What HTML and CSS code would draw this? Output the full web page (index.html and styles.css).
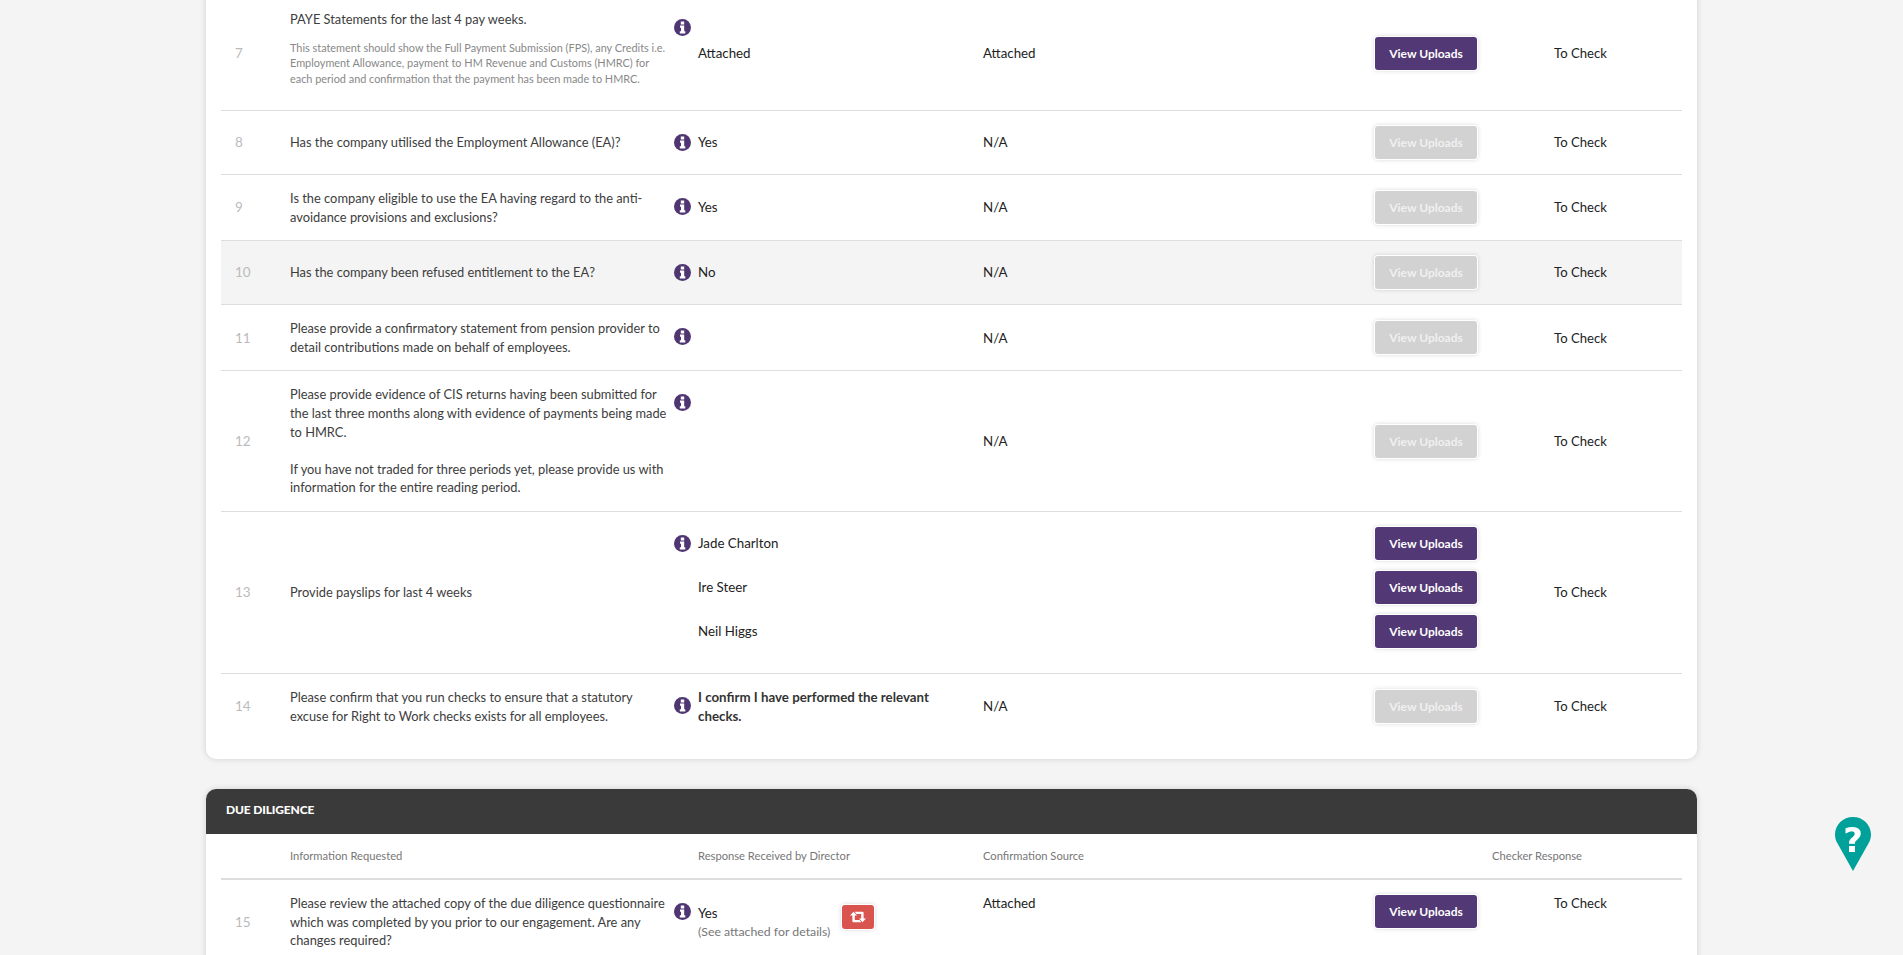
FILE: index.html
```html
<!DOCTYPE html>
<html>
  <head>
    <meta charset="utf-8">
    <title>Review</title>
    <link rel="stylesheet" href="styles.css">
  </head>
  <body>
    <svg class="defs" width="0" height="0">
      <symbol id="info" viewBox="0 0 17 17">
        <circle cx="8.5" cy="8.5" r="8.5" fill="#4f3673"/>
        <path fill="#fff" d="M6.800 2.600h3.400v2.800H6.800zM6 6.600h4.200v5.600h1.100v2.200H5.800v-2.200h1.200V8.800H6z"/>
      </symbol>
    </svg>

    <div class="page">
      <div class="card card-first">
        <table class="checks">
          <colgroup>
            <col class="c-num"><col class="c-question"><col class="c-icon"><col class="c-response"><col class="c-source"><col class="c-upload"><col class="c-status">
          </colgroup>
          <tbody>
            <tr>
              <td class="num">7</td>
              <td class="question">
                PAYE Statements for the last 4 pay weeks.
                <p class="note">This statement should show the Full Payment Submission (FPS), any Credits i.e. Employment Allowance, payment to HM Revenue and Customs (HMRC) for each period and confirmation that the payment has been made to HMRC.</p>
              </td>
              <td class="icon"><svg class="info"><use href="#info"/></svg></td>
              <td class="answer">Attached</td>
              <td class="source">Attached</td>
              <td><a class="btn">View Uploads</a></td>
              <td class="status">To Check</td>
            </tr>
            <tr>
              <td class="num">8</td>
              <td class="question">Has the company utilised the Employment Allowance (EA)?</td>
              <td class="icon"><svg class="info"><use href="#info"/></svg></td>
              <td class="answer">Yes</td>
              <td class="source">N/A</td>
              <td><a class="btn btn-off">View Uploads</a></td>
              <td class="status">To Check</td>
            </tr>
            <tr>
              <td class="num">9</td>
              <td class="question">Is the company eligible to use the EA having regard to the anti-avoidance provisions and exclusions?</td>
              <td class="icon"><svg class="info"><use href="#info"/></svg></td>
              <td class="answer">Yes</td>
              <td class="source">N/A</td>
              <td><a class="btn btn-off">View Uploads</a></td>
              <td class="status">To Check</td>
            </tr>
            <tr class="hover">
              <td class="num">10</td>
              <td class="question">Has the company been refused entitlement to the EA?</td>
              <td class="icon"><svg class="info"><use href="#info"/></svg></td>
              <td class="answer">No</td>
              <td class="source">N/A</td>
              <td><a class="btn btn-off">View Uploads</a></td>
              <td class="status">To Check</td>
            </tr>
            <tr>
              <td class="num">11</td>
              <td class="question">Please provide a confirmatory statement from pension provider to detail contributions made on behalf of employees.</td>
              <td class="icon"><svg class="info"><use href="#info"/></svg></td>
              <td class="answer"></td>
              <td class="source">N/A</td>
              <td><a class="btn btn-off">View Uploads</a></td>
              <td class="status">To Check</td>
            </tr>
            <tr>
              <td class="num">12</td>
              <td class="question">Please provide evidence of CIS returns having been submitted for the last three months along with evidence of payments being made to HMRC.<br><br>If you have not traded for three periods yet, please provide us with information for the entire reading period.</td>
              <td class="icon"><svg class="info"><use href="#info"/></svg></td>
              <td class="answer"></td>
              <td class="source">N/A</td>
              <td><a class="btn btn-off">View Uploads</a></td>
              <td class="status">To Check</td>
            </tr>
            <tr>
              <td class="num">13</td>
              <td class="question">Provide payslips for last 4 weeks</td>
              <td class="icon"><svg class="info"><use href="#info"/></svg></td>
              <td class="answer">
                <div class="stack"><div class="item">Jade Charlton</div><div class="item">Ire Steer</div><div class="item">Neil Higgs</div></div>
              </td>
              <td class="source"></td>
              <td>
                <div class="stack"><div class="item"><a class="btn">View Uploads</a></div><div class="item"><a class="btn">View Uploads</a></div><div class="item"><a class="btn">View Uploads</a></div></div>
              </td>
              <td class="status">To Check</td>
            </tr>
            <tr class="last">
              <td class="num">14</td>
              <td class="question">Please confirm that you run checks to ensure that a statutory excuse for Right to Work checks exists for all employees.</td>
              <td class="icon"><svg class="info"><use href="#info"/></svg></td>
              <td class="answer strong">I confirm I have performed the relevant checks.</td>
              <td class="source">N/A</td>
              <td><a class="btn btn-off">View Uploads</a></td>
              <td class="status">To Check</td>
            </tr>
          </tbody>
        </table>
      </div>

      <div class="card">
        <div class="card-head">DUE DILIGENCE</div>
        <table class="checks">
          <colgroup>
            <col class="c-num"><col class="c-question"><col class="c-icon"><col class="c-response"><col class="c-source"><col class="c-upload"><col class="c-status">
          </colgroup>
          <thead>
            <tr>
              <th></th>
              <th>Information Requested</th>
              <th></th>
              <th>Response Received by Director</th>
              <th>Confirmation Source</th>
              <th class="th-checker" colspan="2">Checker Response</th>
            </tr>
          </thead>
          <tbody>
            <tr class="top">
              <td class="num">15</td>
              <td class="question">Please review the attached copy of the due diligence questionnaire which was completed by you prior to our engagement. Are any changes required?</td>
              <td class="icon"><svg class="info"><use href="#info"/></svg></td>
              <td class="answer">
                <div class="yes-row">
                  <div class="yes">Yes<small>(See attached for details)</small></div>
                  <a class="btn-red">
                    <svg width="16" height="12" viewBox="0 0 16 12">
                      <path fill="#fff" d="M0 4.500 3.500.8 7 4.500H4.800V9h4.700l1.800 2.200H3.400a1 1 0 0 1-1-1V4.500z"/>
                      <path fill="#fff" d="M16 7.500l-3.500 3.700L9 7.500h2.200V3H6.500L4.700.8h7.900a1 1 0 0 1 1 1v5.700z"/>
                    </svg>
                  </a>
                </div>
              </td>
              <td class="source">Attached</td>
              <td><a class="btn">View Uploads</a></td>
              <td class="status">To Check</td>
            </tr>
          </tbody>
        </table>
      </div>
    </div>

    <a class="help">
      <svg width="36" height="54" viewBox="0 0 35 54" preserveAspectRatio="none">
        <path fill="#00a19a" d="M17.500 0C7.800 0 0 7.800 0 17.500c0 3.300.9 6.400 2.500 9L17.500 54l15-27.500c1.600-2.600 2.500-5.700 2.500-9C35 7.800 27.200 0 17.500 0z"/>
        <text x="17.500" y="35" text-anchor="middle" class="help-mark">?</text>
      </svg>
    </a>
  </body>
</html>
```

FILE: styles.css
```css
html, body {
  height: 955px;
  overflow: hidden;
}
body {
  margin: 0;
  background: #f4f4f4;
  font-family: "Lato", sans-serif;
  font-size: 12.85px;
  color: #3d3d3d;
}
.defs {
  display: block;
  height: 0;
}
.page {
  width: 1491px;
  margin: -4px auto 0;
}
.card {
  background: #fff;
  border-radius: 10px;
  box-shadow: 0 0 6px rgba(0, 0, 0, .15);
  padding: 0 15px 20px;
  margin-bottom: 30px;
}
.card-first {
  border-radius: 0 0 10px 10px;
}
.card-head {
  background: #3a3a3a;
  color: #fff;
  font-size: 12px;
  font-weight: 900;
  letter-spacing: -.15px;
  height: 45px;
  line-height: 41px;
  margin: 0 -15px;
  padding-left: 20px;
  border-radius: 10px 10px 0 0;
}

.checks {
  width: 1461px;
  table-layout: fixed;
  border-collapse: separate;
  border-spacing: 0;
  line-height: 18.6px;
}
.c-num { width: 69px; }
.c-question { width: 384px; }
.c-icon { width: 24px; }
.c-response { width: 285px; }
.c-source { width: 392px; }
.c-upload { width: 179px; }
.c-status { width: 128px; }

.checks th {
  text-align: left;
  font-size: 11.2px;
  font-weight: 400;
  color: #777;
  height: 44px;
  padding: 0;
  border-bottom: 2px solid #ddd;
}
.checks th.th-checker {
  text-align: right;
  padding-right: 100px;
}
.checks td {
  padding: 14px 0;
  border-bottom: 1px solid #ddd;
  vertical-align: middle;
}
.checks tr.last td {
  border-bottom: 0;
}
.checks tr.hover td {
  background: #f4f4f4;
}
.checks tr.top td {
  vertical-align: top;
}
.checks tr.top td.num,
.checks tr.top td.question {
  vertical-align: middle;
}

.checks td.num {
  color: #bbb;
  font-size: 13.5px;
  padding-left: 14px;
}
.checks td.question {
  padding-right: 4px;
}
.checks td.icon {
  vertical-align: top;
  padding-top: 23px;
}
.checks td.status {
  color: #222;
  font-size: 13.1px;
}
.answer,
.source {
  color: #222;
  font-size: 13.3px;
}
.checks td.strong {
  font-weight: 700;
  color: #333;
  padding-right: 30px;
}
.note {
  font-size: 10.9px;
  line-height: 15.5px;
  color: #888;
  margin: 11px 0 10px;
}
.info {
  display: block;
  width: 17px;
  height: 17px;
}

.stack {
  padding-bottom: 1px;
}
.item {
  height: 35px;
  margin-bottom: 9px;
  display: flex;
  align-items: center;
}

.btn {
  display: block;
  width: 102px;
  height: 33px;
  margin: 1px 0;
  line-height: 33px;
  text-align: center;
  font-size: 12px;
  font-weight: 700;
  color: #fff;
  background: #523874;
  border-radius: 3px;
  box-shadow: 0 0 0 1px #fff, 0 0 4px 1px rgba(0, 0, 0, .15);
}
.btn-off {
  background: #d2d2d2;
  color: #f0f0f0;
}
.btn-red {
  display: flex;
  align-items: center;
  justify-content: center;
  width: 32px;
  height: 24px;
  background: #d9534f;
  border-radius: 3px;
  box-shadow: 0 0 0 1px #fff, 0 0 4px 1px rgba(0, 0, 0, .15);
  margin-top: 11px;
}
.yes-row {
  display: flex;
  gap: 12px;
}
.yes {
  padding-top: 10px;
}
.yes small {
  display: block;
  font-size: 12.3px;
  color: #777;
}

.help {
  position: fixed;
  left: 1835px;
  top: 817px;
}
.help-mark {
  font-family: "DejaVu Sans", sans-serif;
  font-weight: 700;
  font-size: 33px;
  fill: #fff;
}
```
